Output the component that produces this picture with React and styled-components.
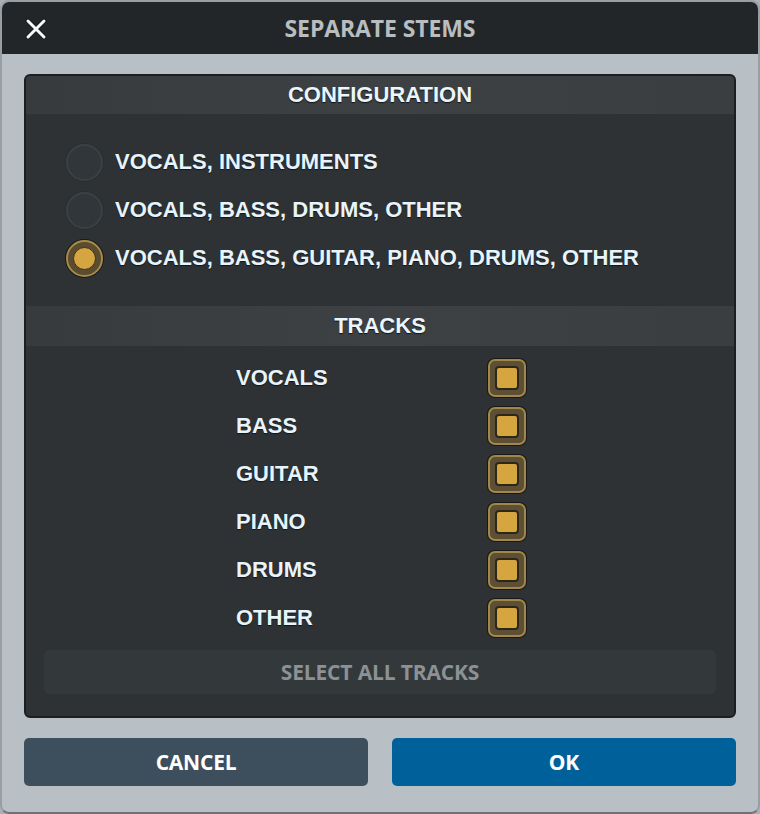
import React, { useState } from "react";
import styled, { createGlobalStyle } from "styled-components";

const configurations = [
  "VOCALS, INSTRUMENTS",
  "VOCALS, BASS, DRUMS, OTHER",
  "VOCALS, BASS, GUITAR, PIANO, DRUMS, OTHER",
];

const trackNames = ["VOCALS", "BASS", "GUITAR", "PIANO", "DRUMS", "OTHER"];

export default function App() {
  const [selectedConfig, setSelectedConfig] = useState(2);
  const [tracks, setTracks] = useState(trackNames.map(() => true));

  const toggleTrack = (index) => {
    setTracks((prev) => prev.map((value, i) => (i === index ? !value : value)));
  };

  return (
    <>
      <GlobalStyle />
      <Window>
        <TitleBar>
          <CloseButton aria-label="close">
            <svg width="22" height="22" viewBox="0 0 22 22">
              <path
                d="M3 3 L19 19 M19 3 L3 19"
                stroke="#1a1c1d"
                strokeWidth="5"
                strokeLinecap="round"
                fill="none"
              />
              <path
                d="M3 3 L19 19 M19 3 L3 19"
                stroke="#f2f8fc"
                strokeWidth="3"
                strokeLinecap="round"
                fill="none"
              />
            </svg>
          </CloseButton>
          <Title>SEPARATE STEMS</Title>
          <span />
        </TitleBar>

        <Body>
          <Panel>
            <SectionHeader>CONFIGURATION</SectionHeader>
            <ConfigList>
              {configurations.map((label, index) => (
                <ConfigRow key={label} onClick={() => setSelectedConfig(index)}>
                  <Radio checked={index === selectedConfig}>
                    {index === selectedConfig && <RadioDot />}
                  </Radio>
                  <Label>{label}</Label>
                </ConfigRow>
              ))}
            </ConfigList>

            <SectionHeader tall>TRACKS</SectionHeader>
            <TrackList>
              {trackNames.map((name, index) => (
                <TrackRow key={name} onClick={() => toggleTrack(index)}>
                  <Label>{name}</Label>
                  <Checkbox>{tracks[index] && <CheckMark />}</Checkbox>
                </TrackRow>
              ))}
              <SelectAll onClick={() => setTracks(trackNames.map(() => true))}>
                SELECT ALL TRACKS
              </SelectAll>
            </TrackList>
          </Panel>

          <Footer>
            <FooterButton>CANCEL</FooterButton>
            <FooterButton primary>OK</FooterButton>
          </Footer>
        </Body>
      </Window>
    </>
  );
}

const GlobalStyle = createGlobalStyle`
  html, body {
    margin: 0;
    padding: 0;
    background: #aab0b4;
  }
  * {
    box-sizing: border-box;
  }
`;

const Window = styled.div`
  width: 760px;
  height: 814px;
  display: flex;
  flex-direction: column;
  border: 2px solid #989ea2;
  border-bottom-color: #6d7275;
  border-radius: 9px;
  overflow: hidden;
  background-color: #b9c0c5;
`;

const TitleBar = styled.div`
  height: 52px;
  flex-shrink: 0;
  display: grid;
  grid-template-columns: 68px 1fr 68px;
  align-items: center;
  background-color: #222628;
`;

const CloseButton = styled.div`
  display: flex;
  align-items: center;
  justify-content: center;
  cursor: pointer;
  padding-top: 1px;
`;

const Title = styled.h1`
  margin: 0;
  text-align: center;
  font-family: "Open Sans", "Liberation Sans", sans-serif;
  font-weight: 700;
  font-size: 23px;
  letter-spacing: -0.1px;
  color: #b8bdc0;
`;

const Body = styled.div`
  flex: 1;
  display: flex;
  flex-direction: column;
  gap: 20px;
  padding: 20px 22px 26px;
`;

const Panel = styled.div`
  display: flex;
  flex-direction: column;
  height: 644px;
  border: 2px solid #1c1e20;
  border-radius: 6px;
  overflow: hidden;
  background-color: #2e3234;
`;

const SectionHeader = styled.div`
  height: ${({ tall }) => (tall ? "40px" : "38px")};
  display: flex;
  align-items: center;
  justify-content: center;
  background: linear-gradient(90deg, #373b3e 0%, #3d4144 50%, #3a3e41 100%);
  font-family: "Liberation Sans", Arial, sans-serif;
  font-weight: 700;
  font-size: 22px;
  color: #eaf5fc;
  text-shadow: 0 1px 1px rgba(0, 0, 0, 0.7);
`;

const ConfigList = styled.div`
  display: flex;
  flex-direction: column;
  padding: 24px 40px;
`;

const ConfigRow = styled.div`
  height: 48px;
  display: flex;
  align-items: center;
  gap: 12px;
  cursor: pointer;
`;

const Label = styled.span`
  font-family: "Liberation Sans", Arial, sans-serif;
  font-weight: 700;
  font-size: 22px;
  color: #e8f4fc;
  text-shadow: 0 1px 1px rgba(0, 0, 0, 0.6);
`;

const Radio = styled.div`
  width: 37px;
  height: 37px;
  border-radius: 50%;
  display: flex;
  align-items: center;
  justify-content: center;
  background-color: ${({ checked }) => (checked ? "#5a4c31" : "#31363a")};
  border: 2px solid ${({ checked }) => (checked ? "#a88a47" : "#3b4043")};
  box-shadow: ${({ checked }) =>
    checked ? "0 0 0 1px #17191a" : "0 0 0 1px #2b2f31"};
`;

const RadioDot = styled.div`
  width: 23px;
  height: 23px;
  border-radius: 50%;
  background-color: #d5a541;
  border: 1px solid #3b311d;
`;

const TrackList = styled.div`
  flex: 1;
  display: flex;
  flex-direction: column;
  padding: 8px 18px 22px;
`;

const TrackRow = styled.div`
  width: 292px;
  height: 48px;
  margin: 0 auto;
  padding-left: 2px;
  display: flex;
  align-items: center;
  justify-content: space-between;
  cursor: pointer;
`;

const Checkbox = styled.div`
  width: 38px;
  height: 38px;
  border-radius: 7px;
  display: flex;
  align-items: center;
  justify-content: center;
  background-color: #5b4f35;
  border: 2px solid #a48746;
  box-shadow: 0 0 0 1px #16181a;
`;

const CheckMark = styled.div`
  width: 24px;
  height: 24px;
  border-radius: 4px;
  background-color: #d5a540;
  border: 2px solid #2c2719;
`;

const SelectAll = styled.button`
  margin-top: 8px;
  height: 44px;
  border: none;
  border-radius: 5px;
  background-color: #33383b;
  font-family: "Open Sans", "Liberation Sans", sans-serif;
  font-weight: 700;
  font-size: 21px;
  letter-spacing: -0.15px;
  color: #8c9195;
  cursor: pointer;
`;

const Footer = styled.div`
  display: grid;
  grid-template-columns: 1fr 1fr;
  gap: 24px;
`;

const FooterButton = styled.button`
  height: 48px;
  border: none;
  border-radius: 5px;
  background-color: ${({ primary }) => (primary ? "#00609a" : "#3d4f5c")};
  font-family: "Open Sans", "Liberation Sans", sans-serif;
  font-weight: 700;
  font-size: 21px;
  letter-spacing: -0.2px;
  color: #ffffff;
  cursor: pointer;
`;
